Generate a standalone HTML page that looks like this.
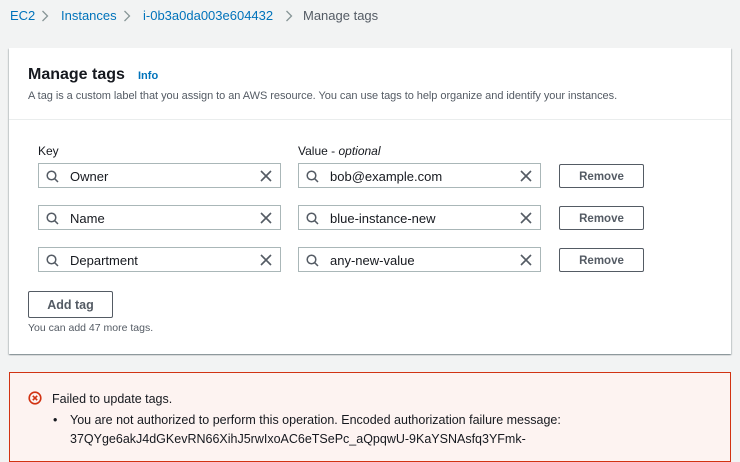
<!DOCTYPE html>
<html><head><style>
*{box-sizing:border-box;margin:0;padding:0}
body{width:740px;height:451px;overflow:hidden;background:#f2f3f3;font-family:"Liberation Sans",Arial,sans-serif;color:#16191f;position:relative}
.a{position:absolute}
.bc{top:8px;font-size:13px;color:#0073bb}
.panel{left:9px;top:48px;width:722px;height:306px;background:#fff;box-shadow:0 1px 1px 0 rgba(0,28,36,.3),1px 1px 1px 0 rgba(0,28,36,.15),-1px 1px 1px 0 rgba(0,28,36,.15)}
.inp{height:25px;border:1px solid #aab7b8;background:#fff;font-size:13px}
.inp svg.s{position:absolute;left:7px;top:6px}
.inp span{position:absolute;left:31px;top:5px}
.inp svg.x{position:absolute;right:8px;top:6px}
.btn{border:1px solid #545b64;border-radius:2px;background:#fff;font-weight:bold;color:#545b64;text-align:center}
</style></head><body>
<div class="a bc" style="left:10px">EC2</div>
<svg class="a" style="left:41px;top:10px" width="8" height="12" viewBox="0 0 8 12"><path d="M1.5 1L6.5 6L1.5 11" fill="none" stroke="#879596" stroke-width="1.3"/></svg>
<div class="a bc" style="left:61px">Instances</div>
<svg class="a" style="left:123px;top:10px" width="8" height="12" viewBox="0 0 8 12"><path d="M1.5 1L6.5 6L1.5 11" fill="none" stroke="#879596" stroke-width="1.3"/></svg>
<div class="a bc" style="left:143px">i-0b3a0da003e604432</div>
<svg class="a" style="left:285px;top:10px" width="8" height="12" viewBox="0 0 8 12"><path d="M1.5 1L6.5 6L1.5 11" fill="none" stroke="#879596" stroke-width="1.3"/></svg>
<div class="a bc" style="left:303px;color:#545b64">Manage tags</div>

<div class="a panel">
 <div class="a" style="left:19px;top:18px;font-size:16px;font-weight:bold">Manage tags</div>
 <div class="a" style="left:129px;top:22px;font-size:11px;font-weight:bold;color:#0073bb">Info</div>
 <div class="a" style="left:19px;top:42px;font-size:11px;color:#545b64;letter-spacing:-0.05px">A tag is a custom label that you assign to an AWS resource. You can use tags to help organize and identify your instances.</div>
 <div class="a" style="left:0;top:71px;width:722px;height:1px;background:#eaeded"></div>
 <div class="a" style="left:29px;top:96px;font-size:12px">Key</div>
 <div class="a" style="left:289px;top:96px;font-size:12px">Value - <i>optional</i></div>
</div>

<div id="rows"></div>
<script>
var r=[["Owner","bob@example.com"],["Name","blue-instance-new"],["Department","any-new-value"]];
var s='<svg class="s" width="13" height="13" viewBox="0 0 13 13"><circle cx="5.5" cy="5.5" r="4.3" fill="none" stroke="#545b64" stroke-width="1.5"/><path d="M8.7 8.7L12 12" stroke="#545b64" stroke-width="1.5"/></svg>';
var x='<svg class="x" width="12" height="12" viewBox="0 0 12 12"><path d="M1 1L11 11M11 1L1 11" stroke="#545b64" stroke-width="1.6"/></svg>';
var h='';
r.forEach(function(v,i){var t=163+i*42;
h+='<div class="a inp" style="left:38px;top:'+t+'px;width:243px">'+s+'<span>'+v[0]+'</span>'+x+'</div>';
h+='<div class="a inp" style="left:298px;top:'+t+'px;width:243px">'+s+'<span>'+v[1]+'</span>'+x+'</div>';
h+='<div class="a btn" style="left:559px;top:'+(t+1)+'px;width:85px;height:24px;font-size:11.5px;line-height:24px">Remove</div>';});
document.getElementById('rows').innerHTML=h;
</script>
<div class="a btn" style="left:28px;top:291px;width:85px;height:27px;font-size:12.5px;line-height:27px">Add tag</div>
<div class="a" style="left:28px;top:322px;font-size:10.5px;color:#545b64">You can add 47 more tags.</div>

<div class="a" style="left:9px;top:372px;width:722px;height:90px;background:#fdf3f1;border:1px solid #d13212"></div>
<svg class="a" style="left:28px;top:391px" width="14" height="14" viewBox="0 0 14 14"><circle cx="7" cy="7" r="5.8" fill="none" stroke="#d13212" stroke-width="1.6"/><path d="M4.8 4.8L9.2 9.2M9.2 4.8L4.8 9.2" stroke="#d13212" stroke-width="1.6"/></svg>
<div class="a" style="left:52px;top:392px;font-size:12.5px">Failed to update tags.</div>
<div class="a" style="left:53px;top:413px;font-size:12.5px">•</div>
<div class="a" style="left:70px;top:413px;font-size:12.5px">You are not authorized to perform this operation. Encoded authorization failure message:</div>
<div class="a" style="left:70px;top:432px;font-size:12.5px">37QYge6akJ4dGKevRN66XihJ5rwIxoAC6eTSePc_aQpqwU-9KaYSNAsfq3YFmk-</div>
</body></html>
